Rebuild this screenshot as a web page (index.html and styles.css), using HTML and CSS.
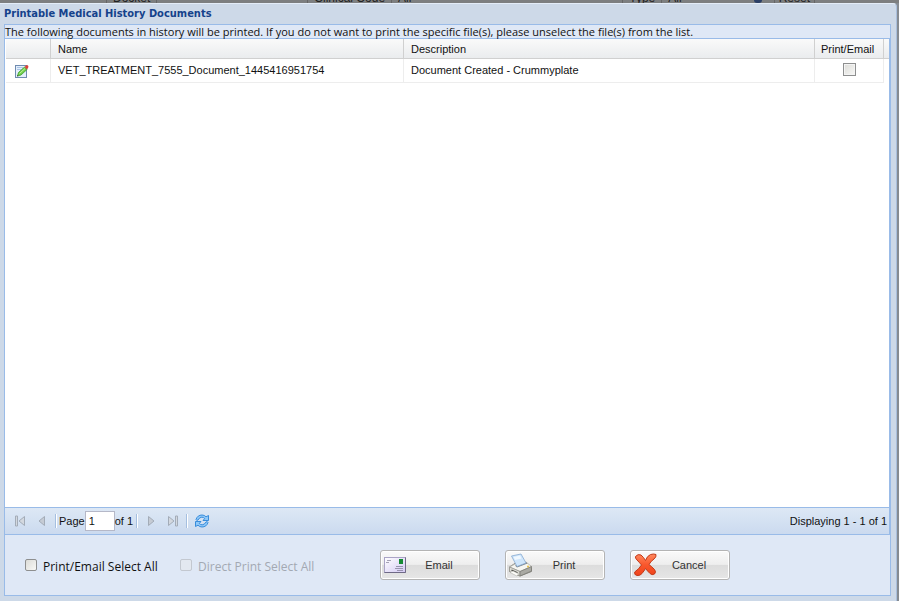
FILE: index.html
```html
<!DOCTYPE html>
<html lang="en">
<head>
    <meta charset="UTF-8">
    <meta name="viewport" content="width=device-width, initial-scale=1.0">
    <title>Printable Medical History Documents</title>
    <link rel="stylesheet" href="styles.css">
</head>
<body>
    <!-- Dimmed page behind the dialog -->
    <div class="backdrop" aria-hidden="true">
        <span class="field">Docket</span>
        <span class="field">Clinical Code</span>
        <span class="value">All</span>
        <span class="field">Type</span>
        <span class="value">All</span>
        <span class="lookup"></span>
        <span class="field">Reset</span>
    </div>

    <div class="window" role="dialog" aria-labelledby="window-title">
        <h1 class="window-title" id="window-title">Printable Medical History Documents</h1>

        <div class="window-body">
            <p class="intro">The following documents in history will be printed. If you do not want to print the specific file(s), please unselect the file(s) from the list.</p>

            <div class="grid">
                <table class="documents">
                    <colgroup>
                        <col class="col-icon">
                        <col class="col-name">
                        <col class="col-description">
                        <col class="col-print">
                        <col class="col-end">
                    </colgroup>
                    <thead>
                        <tr>
                            <th></th>
                            <th>Name</th>
                            <th>Description</th>
                            <th class="print-head">Print/Email</th>
                            <th></th>
                        </tr>
                    </thead>
                    <tbody>
                        <tr>
                            <td class="icon-cell">
                                <svg width="14" height="14" viewBox="0 0 14 14">
                                    <rect x="0.5" y="1.5" width="11" height="12" fill="#e4effc" stroke="#6f8bb0"/>
                                    <path d="M2 3.500h6M2 5.500h4" stroke="#a9c4e4"/>
                                    <path d="M2.500 12L3.500 8.500L9.500 3L12 5.500L6 11z" fill="#6fd048" stroke="#3c9a30" stroke-width="0.800"/>
                                    <path d="M4.500 9.500L10 4.500" stroke="#c4f0a0"/>
                                    <path d="M9.500 3L11 1.500Q12 .5 13 1.500T13 4L12 5.500z" fill="#d8443a"/>
                                    <path d="M2 12.500l.5-1.500 1 1z" fill="#333"/>
                                </svg>
                            </td>
                            <td>VET_TREATMENT_7555_Document_1445416951754</td>
                            <td>Document Created - Crummyplate</td>
                            <td class="check-cell"><input class="check row-check" type="checkbox" aria-label="Print/Email VET_TREATMENT_7555_Document_1445416951754"></td>
                            <td class="end-cell"></td>
                        </tr>
                    </tbody>
                </table>
            </div>

            <div class="paging">
                <button class="page-btn" type="button" aria-label="First page">
                    <svg width="12" height="12" viewBox="0 0 12 12" fill="#d3d8df" stroke="#a3acb8"><path d="M1.500 1v10h2V1zM10.500 1.500v9L5 6z"/></svg>
                </button>
                <button class="page-btn" type="button" aria-label="Previous page">
                    <svg width="12" height="12" viewBox="0 0 12 12" fill="#c5cbd4" stroke="#a3acb8"><path d="M8.500 1.500v9L3 6z"/></svg>
                </button>
                <span class="separator"></span>
                <label for="page">Page</label>
                <input class="page-input" type="text" id="page" value="1">
                <span class="page-total">of 1</span>
                <span class="separator"></span>
                <button class="page-btn" type="button" aria-label="Next page">
                    <svg width="12" height="12" viewBox="0 0 12 12" fill="#c5cbd4" stroke="#a3acb8"><path d="M3.500 1.500v9L9 6z"/></svg>
                </button>
                <button class="page-btn" type="button" aria-label="Last page">
                    <svg width="12" height="12" viewBox="0 0 12 12" fill="#d3d8df" stroke="#a3acb8"><path d="M8.500 1v10h2V1zM1.500 1.500v9L7 6z"/></svg>
                </button>
                <span class="separator"></span>
                <button class="page-btn refresh" type="button" aria-label="Refresh">
                    <svg width="16" height="16" viewBox="0 0 16 16" stroke-linejoin="round" stroke="#2b84d8" stroke-width="0.900" fill="#8fc8f8">
                        <path d="M2 6.500Q3.500 2 8 2Q10.500 2 12 3.800L14.500 2.500V7.500H9L10.700 5.500Q9.500 4.200 7.800 4.200Q5.500 4.200 4 7Q2.500 8 2 6.500z"/>
                        <path d="M14 9.500Q12.500 14 8 14Q5.500 14 4 12.200L1.500 13.500V8.500H7L5.300 10.500Q6.500 11.800 8.200 11.800Q10.500 11.800 12 9Q13.500 8 14 9.500z"/>
                    </svg>
                </button>
                <span class="display-info">Displaying 1 - 1 of 1</span>
            </div>

            <div class="footer">
                <label class="option"><input class="check" type="checkbox"> <span>Print/Email Select All</span></label>
                <label class="option disabled"><input class="check" type="checkbox" disabled> <span>Direct Print Select All</span></label>

                <div class="actions">
                    <button class="action" type="button">
                        <svg width="24" height="24" viewBox="0 0 24 24">
                            <defs>
                                <linearGradient id="letter" x1="0" y1="0" x2="1" y2="1">
                                    <stop offset="0" stop-color="#fff"/>
                                    <stop offset="1" stop-color="#d3c9f4"/>
                                </linearGradient>
                            </defs>
                            <rect x="0.500" y="4.500" width="21" height="15" fill="url(#letter)" stroke="#aaa4c6"/>
                            <path d="M0.500 19.500h21v-15" fill="none" stroke="#6f6a86"/>
                            <path d="M3 7.500h4M2 9.500h3" stroke="#a5a2b6"/>
                            <rect x="15" y="6" width="4" height="5" fill="#168a34"/>
                            <path d="M12 13.500h7M11 15.500h8M13 17.500h6" stroke="#9a94b0"/>
                        </svg>
                        <span>Email</span>
                    </button>
                    <button class="action" type="button">
                        <svg width="24" height="24" viewBox="0 0 24 24" stroke-linejoin="round">
                            <path d="M0.500 14l6-4 10 4 6 1v3.500L11 23 .5 18.500z" fill="#bdbdb7" stroke="#8b8b85"/>
                            <path d="M.5 14L8 10l9-1 5.500 4.500L11 18.500z" fill="#f6f6f2" stroke="#aeaea8" stroke-width="0.800"/>
                            <path d="M6 12.500L17 9l1.500 1.500L8 14.500z" fill="#7d8287"/>
                            <path d="M2.500 3l9.500-2 5 9-9 3.500z" fill="#cfe6fc" stroke="#86a9d0" stroke-width="0.800"/>
                            <path d="M4.500 4l6.500-1.500 1.500 3-6.500 1.500z" fill="#f0f8ff"/>
                            <path d="M.5 14L11 18.500V23L.5 18.500z" fill="#dcdcd6" stroke="#96968f" stroke-width="0.800"/>
                            <path d="M11 18.500l11.500-5V18L11 23z" fill="#a9a9a3" stroke="#7c7c76" stroke-width="0.800"/>
                            <path d="M2.500 17.200l6 2.600" stroke="#4b4b47" stroke-width="1.300"/>
                            <path d="M1 19.500l3-1.500 6 3-2.500 1.800z" fill="#fdfdf9" stroke="#a9a9a2" stroke-width="0.500"/>
                            <circle cx="19" cy="13.500" r="1" fill="#e4bd42"/>
                        </svg>
                        <span>Print</span>
                    </button>
                    <button class="action" type="button">
                        <svg width="24" height="24" viewBox="0 0 24 24">
                            <defs>
                                <linearGradient id="cross" x1="0" y1="0" x2="0" y2="1">
                                    <stop offset="0" stop-color="#ff8a60"/>
                                    <stop offset="0.500" stop-color="#f9572c"/>
                                    <stop offset="1" stop-color="#f0441b"/>
                                </linearGradient>
                            </defs>
                            <path d="M1.500 3.500Q4 .5 7 2Q9.500 4 11.500 7.500Q13 3 16.500 1.500Q20 .5 22 1.500Q22.500 4 20 6Q17 8 15 11.500Q18 14 20.500 16.500Q22.500 19 20.500 21Q18 22.500 16 20.500Q13.500 18 11.500 15.500Q10 18 8 20.500Q6 23 3 22.500Q0 22 .7 19Q5 16 7.500 12Q5 9 3 7Q1 5 1.500 3.500z" fill="url(#cross)" stroke="#c23a18"/>
                        </svg>
                        <span>Cancel</span>
                    </button>
                </div>
            </div>
        </div>
    </div>
</body>
</html>
```
FILE: styles.css
```css
* {
    box-sizing: border-box;
}

body {
    display: flex;
    flex-direction: column;
    height: 100vh;
    margin: 0;
    background-color: #858b92;
    color: #111;
    font-family: "Liberation Sans", Arial, sans-serif;
    font-size: 11px;
}

.backdrop {
    display: flex;
    align-items: flex-end;
    flex: none;
    height: 3px;
    padding-left: 106px;
    overflow: hidden;
    background-color: #7d7f80;
    color: #222;
    font-size: 12px;
    line-height: 9px;
}

.backdrop .field {
    padding: 0 6px;
    border-left: 1px solid #666;
    border-right: 1px solid #666;
}

.backdrop .field + .field {
    margin-left: 150px;
}

.backdrop .value {
    padding-left: 6px;
}

.backdrop .value + .field {
    margin-left: auto;
}

.backdrop .lookup {
    width: 8px;
    height: 3px;
    margin: 0 12px 0 72px;
    border-radius: 0 0 4px 4px;
    background-color: #2b3f66;
}

.backdrop .field:last-child {
    margin-right: 84px;
    padding: 0 4px;
}

/* Dialog */
.window {
    display: flex;
    flex-direction: column;
    flex: 1;
    min-height: 0;
    margin-right: 2px;
    padding: 0 5px 5px 4px;
    border-top: 1px solid #e4edf8;
    border-right: 1px solid #a9bfdd;
    border-top-right-radius: 4px;
    background-color: #cdd9e8;
}

.window-title {
    margin: 0;
    color: #15428b;
    font-family: "DejaVu Sans Condensed", Tahoma, sans-serif;
    font-size: 11px;
    font-weight: bold;
    line-height: 20px;
}

.window-body {
    display: flex;
    flex-direction: column;
    flex: 1;
    min-height: 0;
    border: 1px solid #99bbe8;
    background-color: #dfe8f6;
}

.intro {
    margin: 0;
    border-bottom: 1px solid #99bbe8;
    font-family: "Open Sans", Tahoma, sans-serif;
    font-size: 11px;
    line-height: 13px;
    white-space: nowrap;
}

/* Document list */
.grid {
    flex: 1;
    min-height: 0;
    padding-left: 1px;
    border-right: 1px solid #99bbe8;
    background-color: #fff;
}

.documents {
    width: 100%;
    border-collapse: separate;
    border-spacing: 0;
    table-layout: fixed;
}

.col-icon {
    width: 45px;
}

.col-name {
    width: 353px;
}

.col-print {
    width: 69px;
}

.col-end {
    width: 5px;
}

.documents th {
    height: 20px;
    padding: 0 7px;
    border-right: 1px solid #d0d0d0;
    border-bottom: 1px solid #d0d0d0;
    background: linear-gradient(#fafafa, #eaecee);
    font-weight: normal;
    text-align: left;
    white-space: nowrap;
}

.documents .print-head {
    padding: 0 6px;
}

.documents th:last-child {
    padding: 0;
    border-right: none;
}

.documents td {
    height: 24px;
    padding: 0 7px 2px;
    border-right: 1px solid #ededed;
    border-bottom: 1px solid #ededed;
    white-space: nowrap;
}

.documents .icon-cell {
    padding: 0 0 0 9px;
}

.documents .check-cell {
    padding: 0 0 2px;
    text-align: center;
}

.documents .end-cell {
    padding: 0;
    border: none;
}

.documents svg {
    display: block;
}

/* Checkboxes */
.check {
    appearance: none;
    width: 12px;
    height: 12px;
    margin: 0;
    border: 1px solid #8e8f8f;
    border-radius: 2px;
    background: linear-gradient(135deg, #dcdcd8, #f8f8f6);
}

.check:checked {
    background: #4c7fc0;
}

.check:disabled {
    border-color: #c3c8d0;
    background: #e3e8f0;
}

.row-check {
    width: 13px;
    height: 13px;
    border-radius: 0;
    box-shadow: inset 0 0 0 1px #f4f4f4;
    vertical-align: middle;
}

/* Paging toolbar */
.paging {
    display: flex;
    align-items: center;
    height: 28px;
    padding: 0 2px 0 9px;
    border-top: 1px solid #99bbe8;
    border-right: 1px solid #99bbe8;
    border-bottom: 1px solid #99bbe8;
    background: linear-gradient(#dde8f5, #cbdaef);
}

.page-btn {
    display: flex;
    width: 12px;
    margin-right: 10px;
    padding: 0;
    border: none;
    background: none;
}

.page-btn + .separator {
    margin-left: -3px;
}

.refresh {
    width: 16px;
    margin: 0;
}

.separator {
    width: 2px;
    height: 14px;
    border-left: 1px solid #a5bfe0;
    border-right: 1px solid #fff;
    margin-right: 2px;
}

.page-total + .separator {
    margin-right: 7px;
    margin-left: 3px;
}

.separator:has(+ .refresh) {
    margin-right: 6px;
}

.page-input {
    width: 30px;
    height: 20px;
    padding: 0 3px;
    border: 1px solid #b5b8c8;
    background-color: #fff;
    color: #111;
    font: inherit;
}

.display-info {
    margin-left: auto;
}

/* Footer */
.footer {
    display: flex;
    align-items: center;
    height: 60px;
    padding-left: 20px;
    font-family: "Open Sans", Tahoma, sans-serif;
    font-size: 12px;
}

.option {
    display: flex;
    align-items: center;
    gap: 6px;
    width: 155px;
    white-space: nowrap;
}

.option span {
    padding-top: 2px;
}

.option.disabled {
    width: 200px;
    color: #a3a9b3;
}

.actions {
    display: flex;
    gap: 25px;
}

.action {
    display: flex;
    align-items: center;
    width: 100px;
    height: 30px;
    padding: 0 3px;
    border: 1px solid #b4b4b4;
    border-radius: 3px;
    background: linear-gradient(#fafafa, #eee 48%, #dcdcdc 50%, #e6e6e6);
    box-shadow: inset 0 0 0 1px #fff;
    color: #333;
    font-family: "Liberation Sans", Arial, sans-serif;
    font-size: 11px;
}

.action span {
    flex: 1;
    padding-right: 6px;
    text-align: center;
}
```
